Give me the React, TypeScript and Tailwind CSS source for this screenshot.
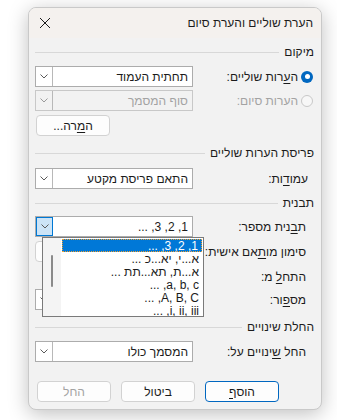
import React from "react";

const FONT = { fontFamily: '"Liberation Sans", "DejaVu Sans", sans-serif' };

function Chevron({ color = "#5a5a5a" }: { color?: string }) {
  return (
    <svg width="8" height="5" viewBox="0 0 8 5" fill="none">
      <path d="M0.5 0.5 L4 4 L7.5 0.5" stroke={color} strokeWidth="1" />
    </svg>
  );
}

function Select({
  value,
  disabled,
  focused,
}: {
  value: string;
  disabled?: boolean;
  focused?: boolean;
}) {
  return (
    <div
      className={`flex h-[21px] w-[158px] shrink-0 border ${
        disabled ? "border-[#c8c8c8] bg-[#f2f2f2] text-[#a3a3a3]" : "border-[#acacac] bg-white text-[#1b1b1b]"
      }`}
    >
      <div className="flex flex-1 items-center pr-[4px] text-[12px] leading-none">{value}</div>
      <div
        className={`flex w-[17px] items-center justify-center ${
          focused ? "border border-[#0078d4] bg-[#cce4f7]" : "border-r border-[#b8b8b8]"
        }`}
      >
        <Chevron color={disabled ? "#9a9a9a" : "#5a5a5a"} />
      </div>
    </div>
  );
}

function Section({ title }: { title: string }) {
  return (
    <div className="flex h-[16px] items-center gap-[5px]">
      <span className="text-[12px] leading-none text-[#1b1b1b]">{title}</span>
      <div className="h-px flex-1 bg-[#d8d8d8]" />
    </div>
  );
}

function Btn({ children, primary, disabled, className = "" }: { children: React.ReactNode; primary?: boolean; disabled?: boolean; className?: string }) {
  return (
    <div
      className={`flex h-[21px] w-[74px] items-center justify-center rounded-[4px] border text-[12px] leading-none ${
        primary ? "border-[#0067c0] bg-[#fdfdfd]" : "border-[#d2d2d2] bg-[#fdfdfd]"
      } ${disabled ? "text-[#a3a3a3]" : "text-[#1b1b1b]"} ${className}`}
    >
      {children}
    </div>
  );
}

const u = (c: string) => <span className="underline underline-offset-[2px]">{c}</span>;

const formats = ["1, 2, 3, ...", "א...י, יא...כ ...", "א...ת, תא...תת ...", "a, b, c, ...", "A, B, C, ...", "i, ii, iii, ..."];

export default function App() {
  return (
    <div className="h-[420px] w-[337px] overflow-hidden bg-white pl-[28px] pt-[7px]" style={FONT}>
      <div
        dir="rtl"
        className="relative flex h-[403px] w-[294px] flex-col overflow-hidden rounded-[8px] border border-[#c9c9c9] bg-[#f2f2f2] shadow-[0_4px_20px_rgba(0,0,0,0.25)]"
      >
        {/* title bar */}
        <div className="flex h-[30px] items-center justify-between bg-[#f4f1ee] pl-[10px] pr-[8px]">
          <span className="text-[12px] text-[#1b1b1b]">הערת שוליים והערת סיום</span>
          <svg width="12" height="12" viewBox="0 0 12 12">
            <path d="M1 1 L11 11 M11 1 L1 11" stroke="#1b1b1b" strokeWidth="1" />
          </svg>
        </div>

        <div className="flex flex-col pl-[6px] pr-[7px] text-[12px] text-[#1b1b1b]">
          <div className="mt-[6px]">
            <Section title="מיקום" />
          </div>

          <div className="mt-[6px] flex items-center">
            <div className="flex flex-1 items-center gap-[3px] pr-[1px]">
              <div className="flex h-[12px] w-[12px] items-center justify-center rounded-full bg-[#0067c0]">
                <div className="h-[5px] w-[5px] rounded-full bg-white" />
              </div>
              <span>ה{u("ע")}רות שוליים:</span>
            </div>
            <Select value="תחתית העמוד" />
          </div>

          <div className="mt-[3px] flex items-center">
            <div className="flex flex-1 items-center gap-[3px] pr-[1px] text-[#a3a3a3]">
              <div className="h-[12px] w-[12px] rounded-full border border-[#c8c8c8] bg-[#f7f7f7]" />
              <span>הערות סיום:</span>
            </div>
            <Select value="סוף המסמך" disabled />
          </div>

          <div className="mt-[4px] flex justify-end">
            <Btn className="ml-[1px]">
              <span>ה{u("מ")}רה...</span>
            </Btn>
          </div>

          <div className="mt-[9px]">
            <Section title="פריסת הערות שוליים" />
          </div>

          <div className="mt-[7px] flex items-center">
            <div className="flex-1 pr-[6px]">עמו{u("ד")}ות:</div>
            <Select value="התאם פריסת מקטע" />
          </div>

          <div className="mt-[6px]">
            <Section title="תבנית" />
          </div>

          <div className="mt-[5px] flex items-center">
            <div className="flex-1 pr-[8px]">ת{u("ב")}נית מספר:</div>
            <Select value="1, 2, 3, ..." focused />
          </div>

          {/* rows partly hidden under the open list */}
          <div className="mt-[4px] flex items-center">
            <div className="flex-1 pr-[8px]">סימון מו{u("ת")}אם אישית:</div>
            <div className="flex w-[158px] gap-[6px]">
              <div className="h-[21px] flex-1 border border-[#acacac] bg-white" />
              <div className="h-[21px] w-[74px] rounded-[4px] border border-[#d2d2d2] bg-[#fdfdfd]" />
            </div>
          </div>

          <div className="mt-[5px] flex items-center">
            <div className="flex-1 pr-[8px]">התח{u("ל")} מ:</div>
            <div className="flex w-[158px]">
              <div className="h-[20px] w-[70px] border border-[#acacac] bg-white" />
            </div>
          </div>

          <div className="mt-[2px] flex items-center">
            <div className="flex-1 pr-[8px]">מס{u("פ")}ור:</div>
            <Select value="" />
          </div>

          <div className="mt-[9px]">
            <Section title="החלת שינויים" />
          </div>

          <div className="mt-[6px] flex items-center">
            <div className="flex-1 pr-[8px]">החל {u("ש")}ינויים על:</div>
            <Select value="המסמך כולו" />
          </div>

          <div className="mt-[19px] flex gap-[10px] pr-[35px]">
            <Btn primary>
              <span>הוס{u("ף")}</span>
            </Btn>
            <Btn>ביטול</Btn>
            <Btn disabled>החל</Btn>
          </div>
        </div>

        {/* open dropdown list */}
        <div className="absolute left-[13px] top-[229px] flex h-[80px] w-[162px] overflow-hidden border border-[#7a7a7a] bg-white">
          <div className="flex flex-1 flex-col pl-[1px] pr-[1px] pt-[1px]">
            {formats.map((f, i) => (
              <div
                key={f}
                className={`flex h-[13px] shrink-0 items-center pr-[3px] text-[12px] leading-none ${
                  i === 0 ? "border border-dotted border-[#f0a030] bg-[#0078d7] text-white" : "text-[#1b1b1b]"
                }`}
              >
                {f}
              </div>
            ))}
          </div>
          <div className="flex w-[18px] justify-center bg-[#f4f4f4] pt-[17px]">
            <div className="h-[32px] w-[2px] rounded-full bg-[#8a8a8a]" />
          </div>
        </div>
      </div>
    </div>
  );
}
